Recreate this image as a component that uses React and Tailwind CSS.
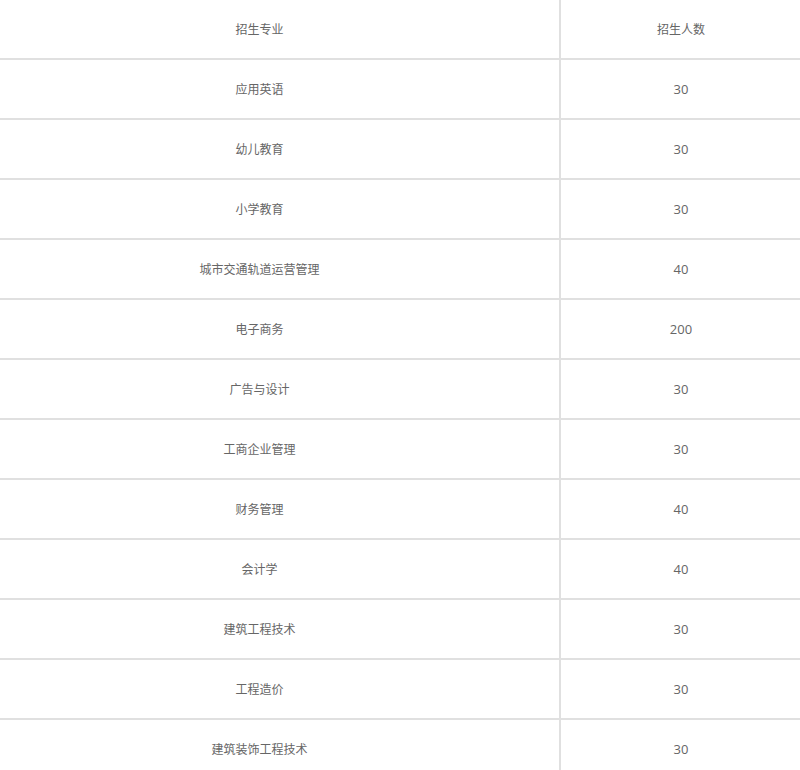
const rows = [
  ["应用英语", "30"],
  ["幼儿教育", "30"],
  ["小学教育", "30"],
  ["城市交通轨道运营管理", "40"],
  ["电子商务", "200"],
  ["广告与设计", "30"],
  ["工商企业管理", "30"],
  ["财务管理", "40"],
  ["会计学", "40"],
  ["建筑工程技术", "30"],
  ["工程造价", "30"],
  ["建筑装饰工程技术", "30"],
];

function Row({ name, num, head }) {
  return (
    <div className="flex border-b-2 border-[#e0e0e0]">
      <div className="w-[601px] h-[58px] pt-[2px] flex items-center justify-center border-r-2 border-[#e0e0e0]">
        {name}
      </div>
      <div
        className={
          head
            ? "w-[240px] h-[58px] pt-[2px] flex items-center justify-center"
            : "w-[240px] h-[58px] pt-[2px] flex items-center justify-center text-[13px]"
        }
      >
        {num}
      </div>
    </div>
  );
}

export default function App() {
  return (
    <div className="w-[800px] h-[770px] overflow-hidden bg-white">
      <div
        className="ml-[-40px] w-[843px] text-[12px] text-[#666]"
        style={{ fontFamily: '"Open Sans", "Noto Sans CJK SC", sans-serif' }}
      >
        <Row name="招生专业" num="招生人数" head />
        {rows.map((r, i) => (
          <Row key={i} name={r[0]} num={r[1]} />
        ))}
      </div>
    </div>
  );
}
